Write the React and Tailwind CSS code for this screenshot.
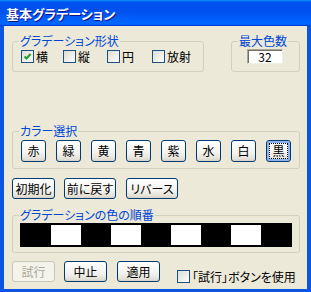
import React from "react";

const jp = "font-['MS_UI_Gothic','Noto_Sans_CJK_JP',sans-serif] [font-feature-settings:'palt']";

function XpButton({ children, className = "", disabled, focused }) {
    const look = disabled
        ? "border-[#C9C7BA] text-[#ACA899] bg-[#F5F4EA]"
        : "border-[#003C74] text-black bg-[linear-gradient(180deg,#ffffff,#f3f2ee_60%,#e3e0d6_90%,#d6d0c5)]";
    return (
        <button
            className={`h-[21px] rounded-[3px] border text-[12px] leading-none whitespace-nowrap flex items-center justify-center p-0 ${look} ${
                focused ? "shadow-[inset_0_0_0_2px_#8DB2F0]" : ""
            } ${className}`}
        >
            {focused ? (
                <span className="border border-dotted border-black px-[2px] h-[16px] flex items-center">
                    {children}
                </span>
            ) : (
                children
            )}
        </button>
    );
}

function Check({ checked, label, className = "" }) {
    return (
        <label className={`flex items-center gap-[2px] text-[12px] leading-[13px] text-black whitespace-nowrap ${className}`}>
            <span className="w-[13px] h-[13px] shrink-0 border border-[#1C5180] bg-[linear-gradient(135deg,#dcdcd7,#f4f4f0_70%,#ffffff)] flex items-center justify-center">
                {checked && (
                    <svg width="9" height="9" viewBox="0 0 9 9">
                        <path d="M1.5 4.5 L3.5 6.5 L7.5 2" fill="none" stroke="#21A121" strokeWidth="2" />
                    </svg>
                )}
            </span>
            <span>{label}</span>
        </label>
    );
}

function Group({ title, className = "", children }) {
    return (
        <fieldset className={`border border-[#D0D0BF] rounded-[3px] ${className}`}>
            <legend className="ml-[6px] px-[1px] text-[12px] leading-[14px] text-[#0046D5] whitespace-nowrap">{title}</legend>
            {children}
        </fieldset>
    );
}

export default function App() {
    const colors = ["赤", "緑", "黄", "青", "紫", "水", "白", "黒"];
    const cells = [0, 1, 0, 1, 0, 1, 0, 1, 0];

    return (
        <div className={`w-[311px] h-[292px] flex flex-col ${jp}`}>
            <div className="h-[26px] shrink-0 flex items-center pl-[6px] bg-[linear-gradient(180deg,#0997ff,#0053ee_8%,#0050ee_40%,#0066ff_88%,#0066ff_93%,#005bff_95%,#003dd7_96%,#003dd7)]">
                <span className="text-white font-bold text-[13px] leading-none [text-shadow:1px_1px_#0F1089]">
                    基本グラデーション
                </span>
            </div>
            <div className="flex-1 bg-[#ECE9D8] border-l-4 border-r-4 border-b-[3px] border-[#0A55E2] pl-[8px] pt-[8px] flex flex-col">
                <div className="flex gap-[27px]">
                    <Group title="グラデーション形状" className="w-[192px] h-[38px]">
                        <div className="flex mt-[2px] pl-[8px]">
                            <Check checked label="横" className="w-[42px]" />
                            <Check label="縦" className="w-[44px]" />
                            <Check label="円" className="w-[45px]" />
                            <Check label="放射" />
                        </div>
                    </Group>
                    <Group title="最大色数" className="w-[69px] h-[38px]">
                        <div className="mt-[1px] ml-[15px] w-[36px] h-[15px] bg-white border border-t-[#ACA899] border-l-[#ACA899] border-b-[#F1EFE2] border-r-[#F1EFE2] shadow-[inset_1px_1px_0_#716F64] flex items-center justify-center text-[12px] leading-none text-black">
                            32
                        </div>
                    </Group>
                </div>

                <Group title="カラー選択" className="w-[288px] h-[45px] mt-[52px]">
                    <div className="flex gap-[10px] mt-[2px] pl-[8px]">
                        {colors.map((c, i) => (
                            <XpButton key={c} className="w-[25px] h-[22px]" focused={i === colors.length - 1}>
                                {c}
                            </XpButton>
                        ))}
                    </div>
                </Group>

                <div className="flex mt-[9px]">
                    <XpButton className="w-[43px]">初期化</XpButton>
                    <XpButton className="w-[52px] ml-[9px]">前に戻す</XpButton>
                    <XpButton className="w-[52px] ml-[10px]">リバース</XpButton>
                </div>

                <Group title="グラデーションの色の順番" className="w-[288px] h-[45px] mt-[9px]">
                    <div className="ml-[7px] mt-[1px] w-[272px] h-[24px] border border-black bg-black flex">
                        {cells.map((w, i) => (
                            <div key={i} className={`flex-1 my-[1px] ${w ? "bg-white" : "bg-black"}`} />
                        ))}
                    </div>
                </Group>

                <div className="flex items-end mt-[8px]">
                    <XpButton className="w-[43px]" disabled>
                        試行
                    </XpButton>
                    <XpButton className="w-[43px] ml-[9px]">中止</XpButton>
                    <XpButton className="w-[43px] ml-[10px]">適用</XpButton>
                    <Check label="「試行」ボタンを使用" className="ml-[17px] mb-[-1px]" />
                </div>
            </div>
        </div>
    );
}
